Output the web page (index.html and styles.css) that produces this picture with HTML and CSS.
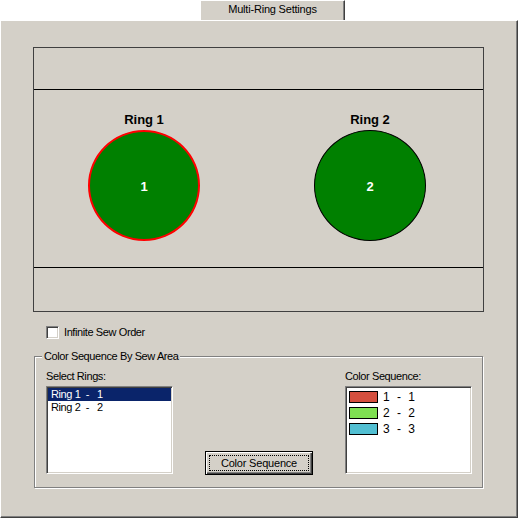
FILE: index.html
```html
<!DOCTYPE html>
<html>
<head>
<meta charset="utf-8">
<title>Multi-Ring Settings</title>
<link rel="stylesheet" href="styles.css">
</head>
<body>
<div class="tabs">
  <div class="tab">Multi-Ring Settings</div>
</div>
<div class="panel">
  <div class="canvas">
    <div class="band band-top"></div>
    <div class="band band-mid">
      <div class="ring">
        <div class="ring-label">Ring 1</div>
        <div class="disc disc-selected">1</div>
      </div>
      <div class="ring">
        <div class="ring-label">Ring 2</div>
        <div class="disc">2</div>
      </div>
    </div>
    <div class="band band-bottom"></div>
  </div>

  <div class="check-row">
    <span class="checkbox"></span>
    <span class="check-label">Infinite Sew Order</span>
  </div>

  <div class="group">
    <span class="legend">Color Sequence By Sew Area</span>
    <div class="col">
      <div class="field-label">Select Rings:</div>
      <div class="listbox">
        <div class="item item-selected">Ring 1  -   1</div>
        <div class="item">Ring 2  -   2</div>
      </div>
    </div>
    <div class="btn-col">
      <div class="button"><span class="focus">Color Sequence</span></div>
    </div>
    <div class="col">
      <div class="field-label">Color Sequence:</div>
      <div class="listbox">
        <div class="color-item"><span class="swatch swatch-red"></span><span class="color-text">1  -  1</span></div>
        <div class="color-item"><span class="swatch swatch-green"></span><span class="color-text">2  -  2</span></div>
        <div class="color-item"><span class="swatch swatch-cyan"></span><span class="color-text">3  -  3</span></div>
      </div>
    </div>
  </div>
</div>
</body>
</html>
```
FILE: styles.css
```css
* { box-sizing: border-box; }

html, body {
  margin: 0;
  padding: 0;
  background: #ffffff;
}

body {
  font-family: "Liberation Sans", Arial, sans-serif;
  font-size: 11px;
  line-height: 13px;
  letter-spacing: -0.4px;
  color: #000;
  width: 519px;
  height: 518px;
  overflow: hidden;
}

.tabs {
  display: flex;
  height: 20px;
  padding-left: 200px;
}

.tab {
  width: 145px;
  height: 20px;
  background: #d4d0c8;
  border-top: 1px solid #ffffff;
  border-left: 1px solid #ffffff;
  border-right: 1px solid #404040;
  box-shadow: inset -1px 0 0 #808080;
  text-align: center;
  padding-top: 2px;
  letter-spacing: -0.2px;
}

.panel {
  width: 518px;
  height: 498px;
  background: #d4d0c8;
  border-top: 1px solid #ffffff;
  border-left: 1px solid #ffffff;
  border-right: 1px solid #404040;
  border-bottom: 1px solid #404040;
  box-shadow: inset -1px -1px 0 #808080;
  padding: 26px 0 0 32px;
}

.canvas {
  width: 451px;
  border: 1px solid #404040;
}

.band-top {
  height: 42px;
  border-bottom: 1px solid #000;
}

.band-mid {
  height: 178px;
  border-bottom: 1px solid #000;
  display: flex;
  gap: 114px;
  padding: 22px 0 0 54px;
}

.band-bottom {
  height: 43px;
}

.ring {
  width: 112px;
  display: flex;
  flex-direction: column;
  align-items: center;
}

.ring-label {
  font-weight: bold;
  font-size: 13px;
  line-height: 15px;
  letter-spacing: 0;
}

.disc {
  margin-top: 3px;
  width: 112px;
  height: 111px;
  border-radius: 50%;
  background: #008000;
  border: 1px solid #000;
  color: #ffffff;
  font-weight: bold;
  font-size: 13px;
  letter-spacing: 0;
  display: flex;
  align-items: center;
  justify-content: center;
  padding-top: 2px;
}

.disc-selected {
  border: 2px solid #ff0000;
}

.check-row {
  display: flex;
  align-items: center;
  height: 13px;
  margin-top: 14px;
  padding-left: 13px;
}

.checkbox {
  width: 13px;
  height: 13px;
  background: #ffffff;
  border-style: solid;
  border-width: 1px;
  border-color: #808080 #ffffff #ffffff #808080;
  box-shadow: inset 1px 1px 0 #404040, inset -1px -1px 0 #d4d0c8;
}

.check-label {
  margin-left: 5px;
}

.group {
  position: relative;
  margin-top: 17px;
  margin-left: 1px;
  width: 449px;
  height: 132px;
  border: 1px solid #808080;
  box-shadow: inset 1px 1px 0 #ffffff, 1px 1px 0 #ffffff;
  display: flex;
  padding: 13px 10px 0 11px;
}

.legend {
  position: absolute;
  top: -7px;
  left: 7px;
  background: #d4d0c8;
  padding: 0 1px 0 2px;
  line-height: 13px;
}

.col {
  width: 127px;
  display: flex;
  flex-direction: column;
}

.field-label {
  height: 13px;
  margin-bottom: 3px;
}

.listbox {
  width: 127px;
  height: 88px;
  background: #ffffff;
  border-style: solid;
  border-width: 1px;
  border-color: #808080 #ffffff #ffffff #808080;
  box-shadow: inset 1px 1px 0 #404040, inset -1px -1px 0 #d4d0c8;
  padding: 1px;
}

.item {
  height: 13px;
  line-height: 13px;
  padding-left: 3px;
  white-space: pre;
}

.item-selected {
  background: #0a246a;
  color: #ffffff;
}

.color-item {
  height: 16px;
  display: flex;
  align-items: center;
  padding-top: 2px;
  padding-left: 2px;
}

.swatch {
  width: 29px;
  height: 12px;
  border: 1px solid #000;
}

.swatch-red { background: #d44f3e; }
.swatch-green { background: #7fe052; }
.swatch-cyan { background: #52bfd2; }

.color-text {
  margin-left: 5px;
  white-space: pre;
  font-size: 12px;
  letter-spacing: 0.2px;
}

.btn-col {
  display: flex;
  align-items: flex-end;
  padding: 0 32px;
  height: 105px;
}

.button {
  width: 108px;
  height: 24px;
  border: 1px solid #000;
  background: #d4d0c8;
  box-shadow: inset 1px 1px 0 #ffffff, inset -1px -1px 0 #404040, inset -2px -2px 0 #808080;
  padding: 3px;
  letter-spacing: -0.2px;
}

.focus {
  display: block;
  height: 16px;
  border: 1px dotted #000;
  text-align: center;
  line-height: 14px;
}
```
